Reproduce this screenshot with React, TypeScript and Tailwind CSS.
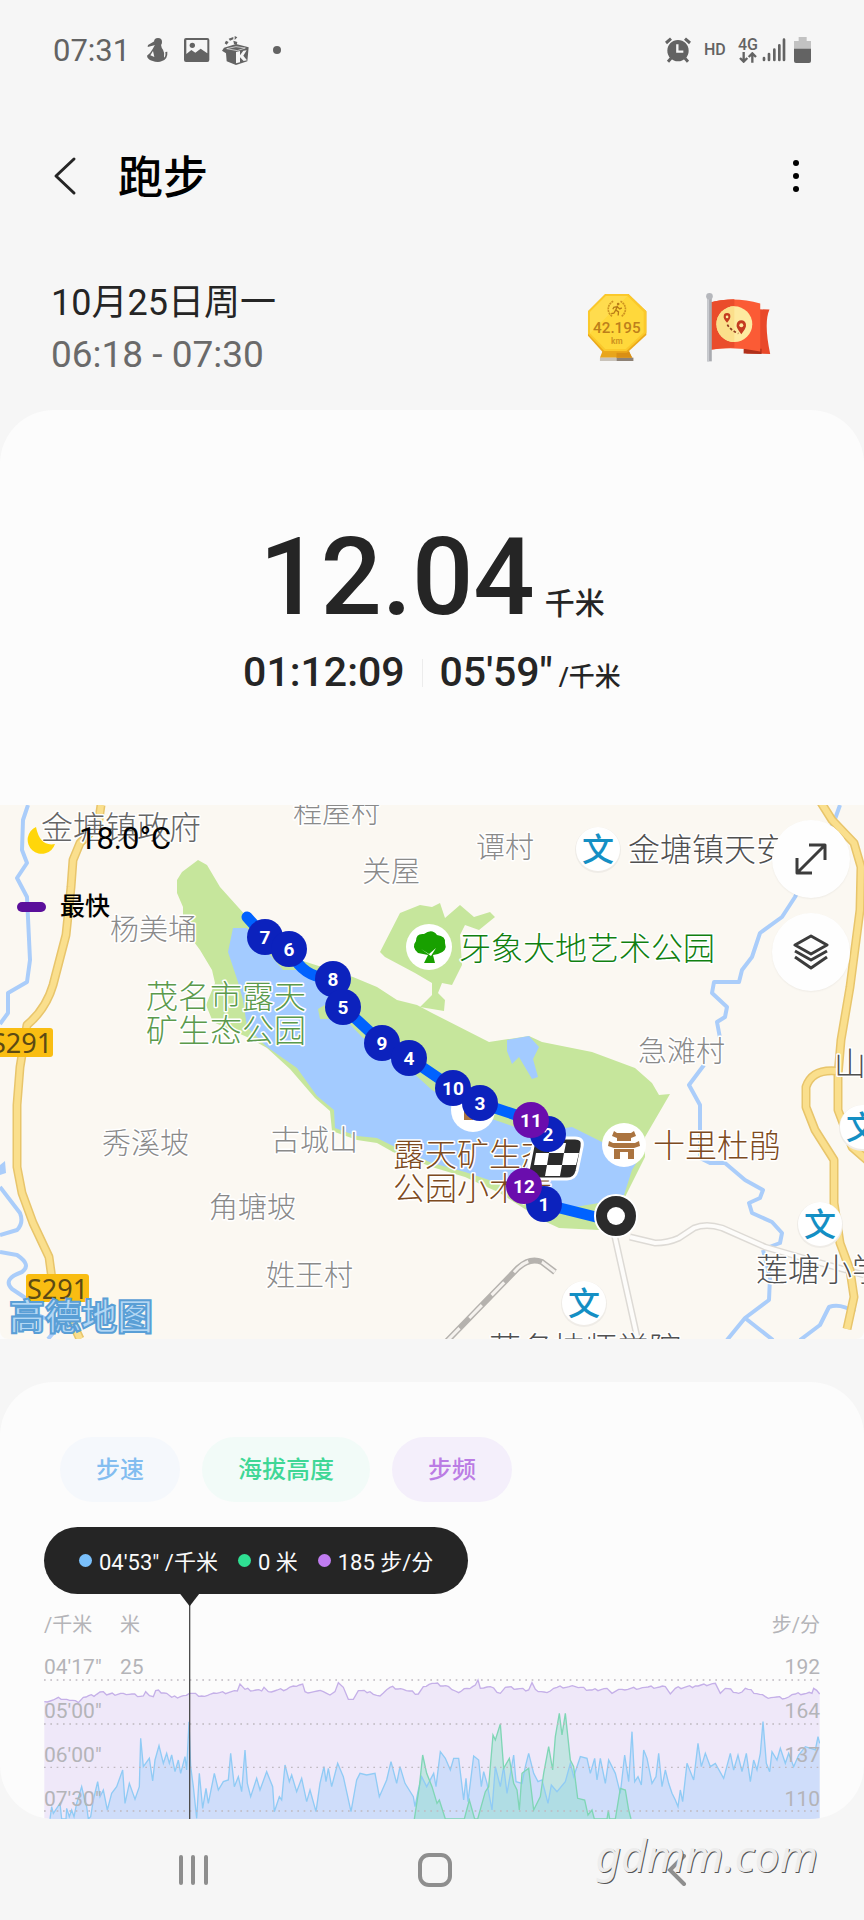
import { ReactNode } from 'react'

const FONT = "font-['Roboto','Noto_Sans_CJK_SC',sans-serif]"

type Point = [number, number]

const MILESTONES = [
  { n: 7, x: 265, y: 132 },
  { n: 6, x: 289, y: 144 },
  { n: 8, x: 333, y: 174 },
  { n: 5, x: 343, y: 202 },
  { n: 9, x: 382, y: 238 },
  { n: 4, x: 409, y: 253 },
  { n: 10, x: 453, y: 283 },
  { n: 3, x: 480, y: 298 },
  { n: 2, x: 548, y: 329 },
  { n: 11, x: 531, y: 315, fast: true },
  { n: 1, x: 544, y: 399 },
  { n: 12, x: 524, y: 381, fast: true },
]

const VILLAGES = [
  { name: '程屋村', x: 293, y: 18 },
  { name: '关屋', x: 362, y: 77 },
  { name: '谭村', x: 476, y: 53 },
  { name: '杨美埇', x: 110, y: 135 },
  { name: '急滩村', x: 638, y: 257 },
  { name: '秀溪坡', x: 102, y: 349 },
  { name: '古城山', x: 271, y: 346 },
  { name: '角塘坡', x: 209, y: 413 },
  { name: '姓王村', x: 266, y: 481 },
]

const PLACES = [
  { name: '金塘镇政府', x: 41, y: 34, color: '#666666' },
  { name: '金塘镇天安', x: 628, y: 56, color: '#505050' },
  { name: '山', x: 834, y: 270, color: '#505050' },
  { name: '莲塘小学', x: 756, y: 476, color: '#505050' },
  { name: '茂名技师学院', x: 489, y: 555, color: '#505050' },
  { name: '牙象大地艺术公园', x: 459, y: 155, color: '#108010' },
  { name: '茂名市露天', x: 146, y: 203, color: '#5b9a4c' },
  { name: '矿生态公园', x: 146, y: 237, color: '#5b9a4c' },
  { name: '露天矿生态', x: 393, y: 361, color: '#7d4a20' },
  { name: '公园小木屋', x: 393, y: 395, color: '#7d4a20' },
  { name: '十里杜鹃', x: 653, y: 352, color: '#7d4a20' },
]

const SCHOOLS: Point[] = [[598, 44], [862, 322], [820, 419], [584, 498]]

const RIVERS = [
  'M28 0L23 15L22 45L27 58L17 73L27 92L30 155L27 177L8 188L8 208L0 219',
  'M0 382L20 408Q24 418 17 425L0 430',
  'M0 447L17 450Q32 460 22 467Q2 474 12 484L24 492L38 510L60 520L48 534',
  'M840 0L835 14L816 50L795 92L782 112L760 128L752 152L742 165L739 177L714 177L712 188L727 202L725 212L717 217L720 233',
  'M704 260L689 280L700 300L700 353L710 358L725 358L745 375L763 385L760 393L749 398L752 408L772 417L782 428L780 438L764 444',
  'M763 445L770 472L769 495L745 513L727 535M745 513L773 535',
  'M800 535L820 520L829 502Q840 498 855 507',
]

const YELLOW_ROADS = [
  'M101 0L99 14L90 28L80 38L73 55L71 82L66 130L53 180Q46 204 27 220L20 262L17 300L17 362L22 388L33 418L49 452L52 474L80 534',
  'M820 -4L832 15L854 38L861 62L860 105L850 182L841 235L838 270L838 305L852 342L868 356',
  'M836 266Q812 264 806 282L806 302L815 325L834 355L834 398L840 438L850 465L854 492L847 524',
]

const CADENCE: Point[] = [
  [133, 305], [160, 300], [175, 292], [200, 298], [235, 308], [250, 292], [290, 283], [310, 275], [320, 285],
  [370, 280], [430, 288], [437, 275], [460, 290], [467, 272], [500, 280], [515, 292], [550, 287], [568, 280],
  [605, 288], [650, 280], [712, 273], [720, 252], [735, 268], [785, 273], [792, 262], [805, 275], [860, 268],
  [880, 258], [908, 252], [915, 275], [970, 275], [990, 285], [1005, 275], [1015, 248], [1030, 262], [1045, 298],
  [1060, 298], [1075, 272], [1110, 275], [1140, 288], [1170, 262], [1210, 268], [1255, 282], [1270, 260],
  [1296, 250], [1346, 260], [1376, 278], [1401, 265], [1426, 255], [1434, 240], [1441, 265], [1471, 260],
  [1501, 280], [1516, 262], [1586, 270], [1596, 248], [1606, 268], [1641, 278], [1671, 262], [1726, 260],
  [1776, 270], [1821, 265], [1836, 280], [1866, 268], [1936, 262], [1996, 260], [2011, 282], [2026, 265],
  [2086, 258], [2146, 250], [2161, 280], [2176, 265], [2216, 280], [2236, 265], [2296, 290], [2356, 295],
  [2386, 282], [2436, 280], [2441, 265], [2459, 282],
]

const PACE: Point[] = [
  [150, 657], [155, 620], [160, 640], [170, 625], [180, 610], [185, 657], [198, 657], [200, 625], [208, 650],
  [215, 630], [222, 650], [230, 610], [245, 560], [255, 605], [260, 620], [265, 657], [272, 650], [280, 600],
  [293, 545], [300, 590], [310, 570], [322, 630], [335, 580], [350, 560], [368, 510], [375, 610], [388, 550],
  [405, 598], [418, 560], [422, 415], [430, 500], [448, 475], [458, 543], [465, 480], [477, 437], [490, 490],
  [500, 460], [508, 490], [515, 465], [525, 515], [535, 480], [542, 520], [555, 470], [560, 510], [567, 365],
  [572, 500], [580, 560], [590, 655], [598, 520], [608, 625], [618, 565], [625, 610], [643, 520], [655, 570],
  [670, 545], [685, 540], [692, 460], [703, 560], [715, 530], [725, 575], [735, 450], [742, 550], [752, 590],
  [770, 535], [780, 570], [800, 515], [818, 560], [823, 635], [838, 590], [845, 600], [855, 495], [868, 545],
  [875, 525], [890, 575], [905, 535], [920, 605], [930, 570], [948, 635], [960, 550], [972, 500], [978, 545],
  [985, 505], [995, 560], [1013, 490], [1030, 530], [1053, 635], [1070, 540], [1080, 520], [1100, 525],
  [1125, 520], [1138, 590], [1160, 540], [1173, 485], [1190, 550], [1200, 500], [1215, 550], [1240, 590],
  [1245, 620], [1255, 570], [1265, 530], [1280, 560], [1301, 520], [1308, 560], [1321, 455], [1336, 475],
  [1351, 510], [1361, 475], [1376, 475], [1391, 600], [1398, 535], [1404, 605], [1421, 468], [1436, 480],
  [1444, 560], [1451, 515], [1461, 550], [1476, 630], [1486, 500], [1501, 560], [1511, 500], [1521, 580],
  [1541, 465], [1548, 545], [1566, 550], [1576, 500], [1586, 460], [1601, 520], [1614, 545], [1626, 540],
  [1644, 610], [1654, 555], [1671, 575], [1696, 545], [1711, 490], [1721, 530], [1741, 470], [1761, 475],
  [1771, 520], [1784, 475], [1791, 540], [1801, 475], [1816, 550], [1826, 480], [1846, 520], [1861, 580],
  [1874, 465], [1886, 545], [1896, 395], [1904, 545], [1914, 530], [1924, 555], [1931, 450], [1941, 475],
  [1956, 550], [1968, 530], [1976, 460], [1986, 560], [1996, 510], [2006, 550], [2016, 580], [2026, 600],
  [2034, 620], [2041, 570], [2048, 605], [2061, 490], [2081, 540], [2094, 430], [2104, 500], [2116, 460],
  [2131, 500], [2146, 490], [2171, 535], [2191, 460], [2201, 510], [2214, 465], [2226, 515], [2239, 460],
  [2251, 545], [2261, 480], [2271, 510], [2281, 460], [2289, 365], [2299, 490], [2309, 515], [2316, 455],
  [2331, 480], [2341, 445], [2356, 490], [2366, 460], [2381, 500], [2396, 465], [2416, 440], [2446, 450],
  [2454, 410], [2459, 430],
]

const ELEVATION: Point[] = [
  [1243, 657], [1258, 560], [1268, 465], [1280, 520], [1296, 560], [1311, 610], [1318, 600], [1336, 657],
  [1393, 657], [1408, 600], [1424, 657], [1433, 657], [1456, 575], [1466, 560], [1479, 405], [1486, 420],
  [1501, 372], [1511, 505], [1528, 475], [1541, 550], [1551, 570], [1558, 630], [1566, 520], [1586, 505],
  [1601, 630], [1621, 590], [1631, 520], [1646, 440], [1658, 510], [1666, 410], [1678, 340], [1686, 405],
  [1696, 340], [1711, 480], [1721, 500], [1733, 595], [1754, 600], [1764, 645], [1776, 630], [1783, 657],
  [1821, 657], [1825, 632], [1829, 657], [1846, 657], [1861, 565], [1876, 570], [1886, 630], [1893, 657],
]

const AXIS_ROWS = [
  { pace: '04\'17"', height: '25', cadence: '192' },
  { pace: '05\'00"', height: '', cadence: '164' },
  { pace: '06\'00"', height: '', cadence: '137' },
  { pace: '07\'30"', height: '', cadence: '110' },
]

// adds small ripples between the sampled points
function ripple(points: Point[]): Point[] {
  const out: Point[] = []
  points.forEach(([x, y], i) => {
    out.push([x, y])
    const next = points[i + 1]
    if (!next) return
    const steps = Math.floor((next[0] - x) / 8)
    for (let k = 1; k < steps; k++) {
      const t = k / steps
      out.push([x + (next[0] - x) * t, y + (next[1] - y) * t + (((i * 5 + k * 7) % 9) - 4)])
    }
  })
  return out
}

function toLine(points: Point[]): string {
  return points.map(([x, y]) => `${x},${Math.round(y)}`).join(' ')
}

function toArea(points: Point[]): string {
  const first = points[0][0]
  const last = points[points.length - 1][0]
  return `${first},657 ${toLine(points)} ${last},657`
}

function StatusBar() {
  return (
    <div className="flex h-25 items-center justify-between pl-[53px] pr-[53px] text-[#636363]">
      <div className="flex items-center">
        <span className="w-[77px] text-[31px] leading-none">07:31</span>
        <svg className="ml-[16px] h-[26px] w-[22px]" viewBox="0 0 66 78" fill="currentColor">
          <circle cx="36" cy="15" r="12" />
          <path d="M25 13L6 24L5 30L28 24Z" />
          <path d="M27 23L45 23Q46 32 51 38Q57 48 54 62Q60 58 58 45L64 44Q66 66 48 72Q36 78 18 71Q4 67 3 56Q14 48 20 36Z" />
          <path d="M21 42L25 60L13 55Z" fill="#f6f6f6" />
        </svg>
        <svg className="ml-[16px] h-6 w-[26px]" viewBox="0 0 78 72" fill="currentColor">
          <path fillRule="evenodd" d="M6 0H70Q76 0 76 6V66Q76 72 70 72H6Q0 72 0 66V6Q0 0 6 0ZM7 6V48L22 36L34 44L50 32L70 46V6Z" />
          <circle cx="25" cy="22" r="8" />
        </svg>
        <svg className="ml-[12px] h-[29px] w-7" viewBox="0 0 84 87" fill="currentColor">
          <path d="M6 35L42 24L80 34L76 76L42 87L14 76L12 52L0 44Z" />
          <path d="M12 14L20 18L14 26L8 22ZM20 8L34 3L34 10L24 14ZM38 0L46 4L38 12ZM34 14L46 18L44 26L36 24Z" />
          <path d="M14 38L42 32L70 36L46 44Z" fill="none" stroke="#f6f6f6" strokeWidth="2" />
          <path d="M42 48L54 45L54 58L64 44L74 43L64 59L75 73L65 75L54 64L54 79L42 82Z" fill="#f6f6f6" />
        </svg>
        <span className="ml-[23px] size-2 rounded-full bg-[#636363]" />
      </div>
      <div className="flex items-center">
        <svg className="h-[26px] w-[26px]" viewBox="0 0 78 78" fill="currentColor">
          <circle cx="39" cy="41" r="32" />
          <path d="M3 18L18 5M75 18L60 5" stroke="currentColor" strokeWidth="9" />
          <path d="M18 64L9 74M60 64L69 74" stroke="currentColor" strokeWidth="9" />
          <path d="M37 22V44H55" fill="none" stroke="#f6f6f6" strokeWidth="7" />
        </svg>
        <span className="ml-[13px] w-[22px] text-[16px] font-medium leading-none">HD</span>
        <div className="ml-[12px] flex w-5 flex-col items-center">
          <span className="text-[16px] font-medium leading-[14px]">4G</span>
          <svg className="h-[11px] w-[18px]" viewBox="0 0 54 33" fill="none" stroke="currentColor" strokeWidth="7">
            <path d="M14 0V28M3 18L14 29L25 18M40 32V4M29 15L40 4L51 15" />
          </svg>
        </div>
        <svg className="ml-1 h-6 w-[24px]" viewBox="0 0 72 72" stroke="currentColor" strokeWidth="8" strokeLinecap="round">
          <path d="M6 60V66M21 48V66M37 35V66M52 22V66M66 5V66" />
        </svg>
        <svg className="ml-2 h-[26px] w-[17px]" viewBox="0 0 51 78">
          <path d="M14 0H38V12H51V40H0V12H14Z" fill="#c2c2c2" />
          <path d="M0 35H51V72Q51 78 45 78H6Q0 78 0 72Z" fill="#636363" />
        </svg>
      </div>
    </div>
  )
}

function Medal() {
  return (
    <svg className="h-[72px] w-[63px]" viewBox="0 0 190 215">
      <path d="M50 180H130L138 200H42Z" fill="#e8a51b" />
      <path d="M42 200H92V210H42Z" fill="#c9c3ba" />
      <path d="M92 200H143V210H92Z" fill="#8d8175" />
      <path d="M92 182H130L140 200H92Z" fill="#d98f14" />
      <path d="M58 8L128 8L182 60L182 132L124 185L52 185L6 134L6 60Z" fill="#eba81a" />
      <path d="M58 8L128 8L182 60L182 125L122 180L55 180L6 128L6 60Z" fill="#fbc92b" />
      <path d="M60 14L125 14L174 62L174 124L120 174L58 174L12 126L12 62Z" fill="#ffd83b" />
      <path d="M12 126L125 14L60 14L12 62Z" fill="#ffe05c" opacity="0.6" />
      <path d="M82 30A26 26 0 0 0 80 76M104 30A26 26 0 0 1 106 76" fill="none" stroke="#cf9420" strokeWidth="5" strokeDasharray="6 2" />
      <circle cx="97" cy="38" r="4" fill="#b77a17" />
      <path d="M95 43L90 56L98 62L97 73M90 56L84 66L76 67M94 46L84 48L81 54M95 47L102 53L108 50" fill="none" stroke="#b77a17" strokeWidth="4" />
      <text x="93" y="127" textAnchor="middle" fontSize="46" fontWeight="500" fill="#bd7f1b">42.195</text>
      <text x="93" y="160" textAnchor="middle" fontSize="25" fontWeight="700" fill="#cf9420">km</text>
    </svg>
  )
}

function Flag() {
  return (
    <svg className="h-[73px] w-[70px]" viewBox="0 0 210 220">
      <path d="M168 55L200 56Q182 95 202 190L130 188Z" fill="#e9492a" />
      <path d="M122 174L176 174L176 190L122 188Z" fill="#b0301a" />
      <path d="M15 36Q92 14 172 38V182Q92 166 15 178Z" fill="#fb5b35" />
      <path d="M15 36Q55 25 94 25V170Q55 170 15 178Z" fill="#ea4c2b" />
      <circle cx="94" cy="100" r="54" fill="#fdeaa0" />
      <path d="M94 46A54 54 0 0 0 94 154Z" fill="#fbdf8b" />
      <path d="M72 96Q60 82 62 76A10 10 0 0 1 82 76Q83 83 72 96Z" fill="#c43a20" />
      <circle cx="72" cy="78" r="4" fill="#fdeaa0" />
      <path d="M115 130Q98 110 101 102A14 14 0 0 1 129 102Q131 111 115 130Z" fill="#c43a20" />
      <circle cx="115" cy="103" r="6" fill="#fdeaa0" />
      <path d="M73 101Q82 118 106 128" fill="none" stroke="#8c3a20" strokeWidth="5" strokeDasharray="8 6" />
      <path d="M12 20H26V212H12Z" fill="#a9abb0" />
      <path d="M12 20H18V212H12Z" fill="#c9cbd0" />
      <circle cx="19" cy="16" r="10" fill="#b5b7bc" />
    </svg>
  )
}

function RouteMap() {
  return (
    <div className="relative overflow-hidden rounded-b-lg">
      <svg className="block h-auto w-full" viewBox="0 0 864 534" role="img" aria-label="跑步路线">
        <rect width="864" height="534" fill="#fbf8f2" />

        {/* Parks and water */}
        <path d="M380 147L400 108L420 100L432 102L440 98L445 113L460 100L474 112L490 107L495 112L479 125L465 120L460 130L462 160L452 180L442 178L438 188L445 195L444 206L420 202L432 190L432 178L415 168L385 152Z" fill="#c6e69c" />
        <path d="M198 55L207 60L220 82L247 112L300 155L353 172L377 182L397 195L417 200L432 208L489 237L529 231L542 237L592 247L635 263L652 278L659 290L670 289L645 332L645 352L625 392L599 425L559 423L542 415L500 388L465 372L432 362L393 347L377 338L357 335L332 326L330 306L315 293L290 264L267 243L247 232L213 217L206 200L215 178L212 165L200 145L183 122L183 102L177 88L177 75L182 67Z" fill="#c6e69c" />
        <path d="M233 123L247 123L270 150L283 165L303 165L324 182L333 195L318 204L320 214L345 214L362 232L383 248L410 265L432 285L465 305L495 315L532 328L572 322L602 337L640 352L632 365L624 390L599 398L575 402L545 395L510 382L465 367L432 358L395 342L377 333L357 331L335 323L334 305L317 291L297 263L267 242L247 222L243 195L238 177L233 162L228 147Z" fill="#a3cbff" />
        <path d="M507 235L529 231L539 242L533 254L538 272L532 274L519 252L512 259L507 246Z" fill="#a3cbff" />
        {RIVERS.map((d) => (
          <path key={d} d={d} fill="none" stroke="#aacdfa" strokeWidth="4" strokeLinejoin="round" />
        ))}
        <path d="M0 360L5 356L6 368L0 370Z" fill="#aacdfa" />

        {/* Roads */}
        <path d="M614 428L638 536M630 432L655 438Q668 438 679 433L694 423Q706 418 722 423L765 442L810 455L864 470" fill="none" stroke="#dddad5" strokeWidth="7" />
        <path d="M614 428L638 536M630 432L655 438Q668 438 679 433L694 423Q706 418 722 423L765 442L810 455L864 470" fill="none" stroke="#fdfcfa" strokeWidth="4" />
        <path d="M447 536L518 463Q530 452 542 457L555 467" fill="none" stroke="#b5b2ae" strokeWidth="6" />
        <path d="M447 536L518 463Q530 452 542 457L555 467" fill="none" stroke="#f5f2ee" strokeWidth="3" strokeDasharray="18 14" />
        {YELLOW_ROADS.map((d) => (
          <g key={d} fill="none" strokeLinejoin="round">
            <path d={d} stroke="#e8c56b" strokeWidth="9" />
            <path d={d} stroke="#fadf8d" strokeWidth="6" />
          </g>
        ))}

        {/* Road signs */}
        <g fontFamily="'Noto Sans', sans-serif" fontSize="27" fill="#5c4a14">
          <rect x="-10" y="223" width="63" height="29" rx="3" fill="#f9bd12" />
          <text x="-9" y="248">S291</text>
          <rect x="26" y="469" width="63" height="28" rx="3" fill="#f9bd12" />
          <text x="27" y="494">S291</text>
        </g>

        {/* Place names */}
        <g fontWeight="300" stroke="#ffffff" strokeWidth="3" strokeLinejoin="round" paintOrder="stroke">
          {VILLAGES.map((v) => (
            <text key={v.name} x={v.x} y={v.y} fontSize="29" fill="#8a8a8a">{v.name}</text>
          ))}
          {PLACES.map((p) => (
            <text key={p.name} x={p.x} y={p.y} fontSize="32" fill={p.color}>{p.name}</text>
          ))}
        </g>

        {/* Points of interest */}
        {SCHOOLS.map(([x, y]) => (
          <g key={x}>
            <circle cx={x} cy={y + 1} r="23" fill="#efece7" />
            <circle cx={x} cy={y} r="22" fill="#ffffff" />
            <text x={x} y={y + 12} textAnchor="middle" fontSize="32" fontWeight="500" fill="#148fc4">文</text>
          </g>
        ))}
        <circle cx="429" cy="142" r="23" fill="#ffffff" />
        <path d="M424 158L428 150L418 148Q411 142 416 136Q416 128 424 129Q432 123 437 130Q446 131 445 138Q448 146 438 149L433 150L435 158Z" fill="#18a000" />
        <path d="M421 144L429 149L436 143L431 151Z" fill="#ffffff" />
        <circle cx="624" cy="340" r="22" fill="#ffffff" />
        <g fill="#ab7440">
          <path d="M614 326L617 328H631L634 326L636 331L631 333V336H617V333L612 331Z" />
          <path d="M609 336L613 338H635L639 336L640 341L634 343H614L608 341Z" />
          <path d="M614 344H634V354H628V347H620V354H614Z" />
        </g>
        <circle cx="473" cy="305" r="22" fill="#ffffff" />
        <path d="M464 303L473 295V315H464Z" fill="#ab7440" />

        <text x="9" y="525" fontSize="36" fontWeight="700" fill="#b4d8f4" stroke="#5a9fd6" strokeWidth="2">高德地图</text>

        {/* Route */}
        <path d="M247 112L265 132L289 144Q300 168 320 172L333 174L343 202L382 238L409 253L453 283L480 298L531 315L548 329" fill="none" stroke="#0062ff" strokeWidth="11" strokeLinecap="round" strokeLinejoin="round" />
        <path d="M524 381L544 399L612 416" fill="none" stroke="#0062ff" strokeWidth="11" />
        <g>
          <path d="M541 333H575Q584 333 582 342L577 366Q575 374 567 374H533Q526 374 528 366L533 341Q535 333 541 333Z" fill="#2b2b2b" stroke="#ffffff" strokeWidth="3" />
          <path d="M551 338H566L564 348H549ZM536 348H549L547 360H534ZM564 348H579L576 360H562ZM547 360H562L560 371H545Z" fill="#ffffff" />
        </g>
        <circle cx="616" cy="411" r="21" fill="#2b2b2b" stroke="#ffffff" strokeWidth="2" />
        <circle cx="616" cy="411" r="9" fill="#ffffff" />
        {MILESTONES.map((m) => (
          <g key={m.n}>
            <circle cx={m.x} cy={m.y} r="18" fill={m.fast ? '#6a0dad' : '#0c22bd'} />
            <text x={m.x} y={m.y + 7} textAnchor="middle" fontSize="19" fontWeight="700" fill="#ffffff">{m.n}</text>
          </g>
        ))}
      </svg>

      {/* Weather and legend */}
      <div className="absolute left-0 top-0 text-black">
        <div className="flex items-center pl-[26px] pt-[18px]">
          <svg className="size-[30px]" viewBox="0 0 30 30">
            <path d="M10 3A14 14 0 1 0 29 20Q14 23 10 3Z" fill="#ffd60a" />
          </svg>
          <span className="ml-[23px] text-[31px] leading-8">18.0°C</span>
        </div>
        <div className="mt-9 flex items-center pl-[17px]">
          <span className="h-[10px] w-[29px] rounded-full bg-[#5b0f9b]" />
          <span className="ml-[14px] text-[25px] font-medium leading-8">最快</span>
        </div>
      </div>

      <div className="absolute right-[14px] top-[15px] flex flex-col gap-[15px]">
        <MapButton label="全屏">
          <path d="M5 31L31 5M16 4H32V19M4 17V32H19" />
        </MapButton>
        <MapButton label="图层">
          <path d="M18 2L34 11L18 20L2 11ZM2 17L18 26L34 17M2 23L18 34L34 23" />
        </MapButton>
      </div>
    </div>
  )
}

function MapButton({ label, children }: { label: string; children: ReactNode }) {
  return (
    <button aria-label={label} className="flex size-[78px] items-center justify-center rounded-full bg-[#fefefe] shadow-xs">
      <svg className="size-9" viewBox="0 0 36 36" fill="none" stroke="#3c3c3c" strokeWidth="3" strokeLinejoin="round">
        {children}
      </svg>
    </button>
  )
}

function Chart() {
  const cadence = ripple(CADENCE)
  return (
    <div className="relative">
      <svg className="block h-auto w-full" viewBox="132 -18 2328 675">
        <polygon points={toArea(cadence)} fill="#efe8f9" />
        <polygon points={toArea(PACE)} fill="#a8d0fb" fillOpacity="0.45" />
        <polygon points={toArea(ELEVATION)} fill="#7fdcc0" fillOpacity="0.38" />
        <polyline points={toLine(cadence)} fill="none" stroke="#c5b0e8" strokeWidth="4" />
        <polyline points={toLine(PACE)} fill="none" stroke="#90cbf5" strokeWidth="4" />
        <polyline points={toLine(ELEVATION)} fill="none" stroke="#7fd6b5" strokeWidth="4" />
        <path d="M132 240H2460M132 372H2460M132 502H2460M132 633H2460" stroke="#bfb9c0" strokeWidth="4" strokeDasharray="5 14" />
        <path d="M569 0V657" stroke="#4d4d4d" strokeWidth="4" />
        <path d="M540 -19H598L569 19Z" fill="#252525" />
      </svg>
      <div className="absolute inset-0 pt-[10px] text-[21px] text-[#b4b4b8]">
        <div className="flex h-[42px] items-center text-[20px]">
          <span className="w-[76px]">/千米</span>
          <span>米</span>
          <span className="ml-auto">步/分</span>
        </div>
        {AXIS_ROWS.map((row) => (
          <div key={row.pace} className="flex h-11 items-center">
            <span className="w-[76px]">{row.pace}</span>
            <span>{row.height}</span>
            <span className="ml-auto">{row.cadence}</span>
          </div>
        ))}
      </div>
    </div>
  )
}

function Reading({ dot, text }: { dot: string; text: string }) {
  return (
    <span className="flex items-center gap-[7px]">
      <span className={`size-[13px] rounded-full ${dot}`} />
      <span className="pt-1">{text}</span>
    </span>
  )
}

function NavBar() {
  return (
    <nav className="relative pl-[72px] pr-[66px]">
      <div className="grid h-[101px] grid-cols-3 items-center justify-items-center text-[#8e8e8e]">
        <button aria-label="最近">
          <svg className="h-8 w-[32px]" viewBox="0 0 32 32" stroke="currentColor" strokeWidth="4" strokeLinecap="round">
            <path d="M4 3V29M16 3V29M29 3V29" />
          </svg>
        </button>
        <button aria-label="主页">
          <svg className="h-[34px] w-[34px]" viewBox="0 0 34 34" fill="none" stroke="currentColor" strokeWidth="4">
            <rect x="2" y="2" width="30" height="30" rx="9" />
          </svg>
        </button>
        <button aria-label="返回">
          <svg className="h-8 w-[20px]" viewBox="0 0 20 32" fill="none" stroke="currentColor" strokeWidth="4" strokeLinecap="round">
            <path d="M17 2L3 16L17 30" />
          </svg>
        </button>
      </div>
      <span className="absolute right-[46px] top-[6px] font-['Noto_Sans',sans-serif] text-[44px] italic leading-[60px] text-[#ededed] [text-shadow:1px_1px_0px_#555]">
        gdmm.com
      </span>
    </nav>
  )
}

export default function App() {
  return (
    <div className={`w-full bg-[#f6f6f6] text-[#252525] ${FONT}`}>
      <StatusBar />

      {/* Title bar */}
      <header className="flex h-[152px] items-center pl-[53px] pr-[63px]">
        <button aria-label="返回">
          <svg className="h-10 w-[24px]" viewBox="0 0 24 40" fill="none" stroke="#252525" strokeWidth="3" strokeLinecap="round" strokeLinejoin="round">
            <path d="M21 3L3 20L21 37" />
          </svg>
        </button>
        <h1 className="ml-[41px] pt-1 text-[45px] font-medium leading-none text-black">跑步</h1>
        <button aria-label="更多" className="ml-auto">
          <svg className="h-[36px] w-[9px]" viewBox="0 0 9 36" fill="#000000">
            <circle cx="4" cy="5" r="3" />
            <circle cx="4" cy="18" r="3" />
            <circle cx="4" cy="31" r="3" />
          </svg>
        </button>
      </header>

      {/* Date and awards */}
      <section className="flex h-[158px] items-center justify-between pb-1 pl-[51px] pr-[91px]">
        <div className="text-[36px] leading-[52px]">
          <p>10月25日周一</p>
          <p className="text-[37px] text-[#6a6a6a]">06:18 - 07:30</p>
        </div>
        <div className="flex items-center gap-[54px] pb-1">
          <Medal />
          <Flag />
        </div>
      </section>

      <section className="rounded-t-[54px] bg-[#fcfcfc]">
        <div className="pb-28 pt-[113px] font-medium">
          <div className="flex items-baseline justify-center gap-[10px] leading-none">
            <span className="text-[108px] leading-none">12.04</span>
            <span className="text-[30px] leading-none">千米</span>
          </div>
          <div className="mt-[21px] flex items-center justify-center">
            <span className="text-[41px] leading-none">01:12:09</span>
            <span className="mx-[17px] h-7 w-px bg-[#ececec]" />
            <span className="flex items-baseline gap-[6px]">
              <span className="text-[41px] leading-none">05'59"</span>
              <span className="text-[26px] leading-none">/千米</span>
            </span>
          </div>
        </div>
        <RouteMap />
      </section>

      <section className="mt-[43px] overflow-hidden rounded-[54px] bg-[#fcfcfc] px-11 pt-[55px]">
        <div className="flex gap-[22px] pl-4 text-[24px] font-medium">
          <button className="h-[65px] rounded-full bg-[#f5f8fc] px-9 text-[#82bdf0]">步速</button>
          <button className="h-[65px] rounded-full bg-[#f2fbf8] px-9 text-[#3fd796]">海拔高度</button>
          <button className="h-[65px] rounded-full bg-[#f4effb] px-9 text-[#bb7ce4]">步频</button>
        </div>
        <div className="mt-[25px] flex h-[67px] w-fit items-center gap-[20px] rounded-full bg-[#252525] px-[35px] text-[22px] text-[#fafafa]">
          <Reading dot="bg-[#7ac0fb]" text={'04\'53" /千米'} />
          <Reading dot="bg-[#2fdf92]" text="0 米" />
          <Reading dot="bg-[#c07cf0]" text="185 步/分" />
        </div>
        <Chart />
      </section>

      <NavBar />
    </div>
  )
}
